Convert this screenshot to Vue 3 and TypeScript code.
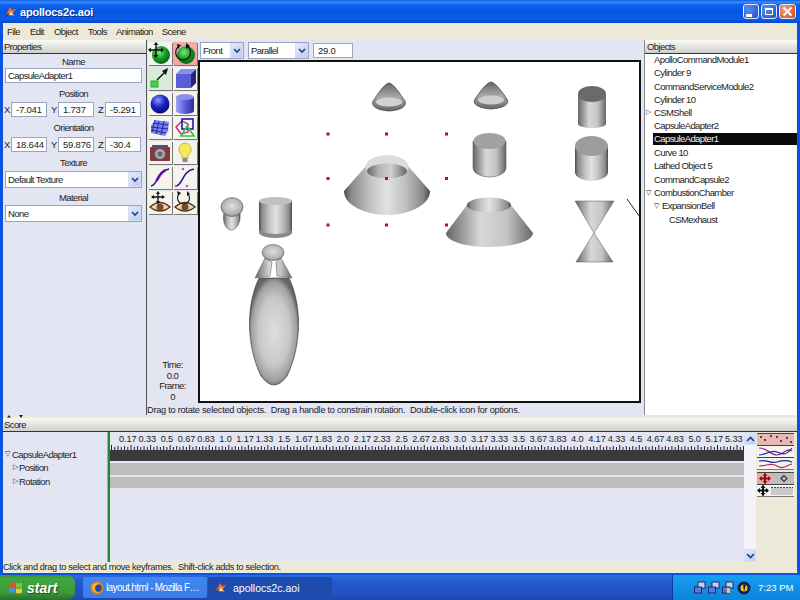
<script setup lang="ts">
const objects = [
  { name: 'ApolloCommandModule1', cls: '' },
  { name: 'Cylinder 9', cls: '' },
  { name: 'CommandServiceModule2', cls: '' },
  { name: 'Cylinder 10', cls: '' },
  { name: 'CSMShell', cls: 'closed' },
  { name: 'CapsuleAdapter2', cls: '' },
  { name: 'CapsuleAdapter1', cls: 'selected' },
  { name: 'Curve 10', cls: '' },
  { name: 'Lathed Object 5', cls: '' },
  { name: 'CommandCapsule2', cls: '' },
  { name: 'CombustionChamber', cls: 'open' },
  { name: 'ExpansionBell', cls: 'open deep' },
  { name: 'CSMexhaust', cls: 'deeper' },
]
const times = ['0.17','0.33','0.5','0.67','0.83','1.0','1.17','1.33','1.5','1.67','1.83','2.0','2.17','2.33','2.5','2.67','2.83','3.0','3.17','3.33','3.5','3.67','3.83','4.0','4.17','4.33','4.5','4.67','4.83','5.0','5.17','5.33']
const ticks = Array.from({ length: 195 }, (_, i) => ({
  x: 1 + i * 3.258,
  top: i % 6 === 0 ? 0 : i % 2 === 0 ? 1 : 2,
}))
const dotXs = [328, 386.5, 446.5]
const dotYs = [134, 178.5, 225]
</script>

<template>
  <div class="desktop">
    <div class="window">
      <div class="titlebar">
        <svg class="app-icon" width="12" height="11" viewBox="0 0 12 11">
          <path d="M1 9 L5 1 L7 4 L11 3 L8 7 L10 10 Z" fill="#e8702a" />
          <path d="M4 9 L6 5 L8 9 Z" fill="#f4e4c0" />
          <path d="M1 9 L4 7 L3 10 Z" fill="#20308a" />
        </svg>
        <span class="title">apollocs2c.aoi</span>
        <div class="caption">
          <span class="cap min"><i></i></span>
          <span class="cap max"><i></i></span>
          <span class="cap close">
            <svg width="11" height="11" viewBox="0 0 11 11"><path d="M1.5 1.5 L9.5 9.5 M9.5 1.5 L1.5 9.5" stroke="#fff" stroke-width="2" /></svg>
          </span>
        </div>
      </div>
      <div class="menubar">
        <span>File</span><span>Edit</span><span>Object</span><span>Tools</span><span>Animation</span><span>Scene</span>
      </div>

      <div class="main">
        <section class="props">
          <header class="head">Properties</header>
          <div class="prop-grid">
            <label>Name</label>
            <div class="input wide">CapsuleAdapter1</div>
            <label>Position</label>
            <div class="coords">
              <div class="coord"><b>X</b><div class="input">-7.041</div></div>
              <div class="coord"><b>Y</b><div class="input">1.737</div></div>
              <div class="coord"><b>Z</b><div class="input">-5.291</div></div>
            </div>
            <label>Orientation</label>
            <div class="coords">
              <div class="coord"><b>X</b><div class="input">18.644</div></div>
              <div class="coord"><b>Y</b><div class="input">59.876</div></div>
              <div class="coord"><b>Z</b><div class="input">-30.4</div></div>
            </div>
            <label>Texture</label>
            <div class="select wide"><span>Default Texture</span><em><svg width="8" height="6" viewBox="0 0 8 6"><path d="M1 1 L4 4 L7 1" fill="none" stroke="#27408b" stroke-width="1.7" /></svg></em></div>
            <label>Material</label>
            <div class="select wide"><span>None</span><em><svg width="8" height="6" viewBox="0 0 8 6"><path d="M1 1 L4 4 L7 1" fill="none" stroke="#27408b" stroke-width="1.7" /></svg></em></div>
          </div>
        </section>

        <aside class="tools">
          <div class="tool-grid">
            <div class="tool">
              <svg width="24" height="23" viewBox="0 0 24 23">
                <defs>
                  <radialGradient id="green" cx="0.4" cy="0.35" r="0.7"><stop offset="0" stop-color="#7ce87c" /><stop offset="0.5" stop-color="#1aa02a" /><stop offset="1" stop-color="#0a5a14" /></radialGradient>
                  <radialGradient id="blue" cx="0.4" cy="0.3" r="0.75"><stop offset="0" stop-color="#8c98ff" /><stop offset="0.5" stop-color="#1a22c4" /><stop offset="1" stop-color="#060a60" /></radialGradient>
                  <linearGradient id="bluecyl" x1="0" x2="1" y1="0" y2="0"><stop offset="0" stop-color="#a0a4f0" /><stop offset="0.5" stop-color="#5a60d8" /><stop offset="1" stop-color="#2a2e98" /></linearGradient>
                  <linearGradient id="metal" x1="0" x2="1" y1="0" y2="0"><stop offset="0" stop-color="#484848" /><stop offset="0.08" stop-color="#888" /><stop offset="0.3" stop-color="#c2c2c2" /><stop offset="0.5" stop-color="#e2e2e2" /><stop offset="0.7" stop-color="#c2c2c2" /><stop offset="0.92" stop-color="#888" /><stop offset="1" stop-color="#484848" /></linearGradient>
                  <linearGradient id="metal2" x1="0" x2="1" y1="0" y2="0"><stop offset="0" stop-color="#666" /><stop offset="0.4" stop-color="#d8d8d8" /><stop offset="0.7" stop-color="#c4c4c4" /><stop offset="1" stop-color="#666" /></linearGradient>
                  <linearGradient id="conegrad" x1="0" x2="0" y1="0" y2="1"><stop offset="0" stop-color="#666" /><stop offset="0.5" stop-color="#a8a8a8" /><stop offset="1" stop-color="#666" /></linearGradient>
                  <radialGradient id="ball" cx="0.5" cy="0.45" r="0.6"><stop offset="0" stop-color="#e0e0e0" /><stop offset="0.7" stop-color="#b4b4b4" /><stop offset="1" stop-color="#777" /></radialGradient>
                  <radialGradient id="body" cx="0.5" cy="0.5" r="0.52"><stop offset="0" stop-color="#dedede" /><stop offset="0.6" stop-color="#c8c8c8" /><stop offset="0.88" stop-color="#a0a0a0" /><stop offset="1" stop-color="#666" /></radialGradient>
                  <linearGradient id="hole" x1="0" x2="1" y1="0" y2="0"><stop offset="0" stop-color="#666" /><stop offset="0.3" stop-color="#b4b4b4" /><stop offset="0.6" stop-color="#d0d0d0" /><stop offset="1" stop-color="#666" /></linearGradient>
                </defs>
                <circle cx="13" cy="13" r="9" fill="url(#green)" />
                <path d="M8 2 V14 M2 8 H14" stroke="#111" stroke-width="1.4" />
                <path d="M8 0 L5.5 3 H10.500 Z M8 16 L5.5 13 H10.500 Z M0 8 L3 5.5 V10.500 Z M16 8 L13 5.500 V10.500 Z" fill="#111" />
              </svg>
            </div>
            <div class="tool on">
              <svg width="24" height="23" viewBox="0 0 24 23">
                <circle cx="13" cy="13" r="9" fill="url(#green)" />
                <path d="M5 5 A7.500 7.500 0 1 0 14 4" fill="none" stroke="#111" stroke-width="1.200" />
                <path d="M4 2 L8 3 L5 7 Z M13 1 L17 4 L13 7 Z" fill="#111" />
              </svg>
            </div>
            <div class="tool mint">
              <svg width="24" height="23" viewBox="0 0 24 23">
                <rect x="3" y="14" width="7" height="6" fill="#3ed24e" stroke="#2aa83a" />
                <path d="M9 13 L19 3" stroke="#111" stroke-width="1.500" />
                <path d="M20 1 L14 4 L18 8 Z" fill="#111" />
              </svg>
            </div>
            <div class="tool">
              <svg width="24" height="23" viewBox="0 0 24 23">
                <path d="M3 7 H18 V21 H3 Z" fill="#5a5cd8" />
                <path d="M3 7 L8 2 H23 L18 7 Z" fill="#8a8cf0" />
                <path d="M18 7 L23 2 V16 L18 21 Z" fill="#22247e" />
              </svg>
            </div>
            <div class="tool">
              <svg width="24" height="23" viewBox="0 0 24 23"><circle cx="12" cy="12" r="9.500" fill="url(#blue)" /></svg>
            </div>
            <div class="tool">
              <svg width="24" height="23" viewBox="0 0 24 23">
                <path d="M3 5 V19 A9 3 0 0 0 21 19 V5 Z" fill="url(#bluecyl)" />
                <ellipse cx="12" cy="5" rx="9" ry="3" fill="#8c90ec" />
              </svg>
            </div>
            <div class="tool">
              <svg width="24" height="23" viewBox="0 0 24 23">
                <path d="M7 4 L21 6 L20 15 L17 20 L3 17 L3 10 Z" fill="#7c82ea" />
                <path d="M5 7 L20 9 M3 11 L20 13 M3 14 L18 17 M11 5 L8 18 M16 5 L13 19 M7 4 L4 16" stroke="#1c2aa8" stroke-width="1" fill="none" />
              </svg>
            </div>
            <div class="tool">
              <svg width="24" height="23" viewBox="0 0 24 23">
                <path d="M3 11 L9 5 L15 8 L15 16 L8 18 Z" fill="none" stroke="#c41e78" stroke-width="1.300" />
                <rect x="9" y="3" width="11" height="10" fill="none" stroke="#141ea8" stroke-width="1.600" />
                <path d="M8 20 L14 10 L21 20 Z" fill="none" stroke="#2ccc44" stroke-width="1.700" />
              </svg>
            </div>
            <div class="tool">
              <svg width="24" height="23" viewBox="0 0 24 23">
                <rect x="2" y="6" width="20" height="14" rx="1" fill="#8a3440" />
                <rect x="4" y="4" width="16" height="3" fill="#5a4a78" />
                <circle cx="12" cy="13" r="5.500" fill="#a8a8a8" stroke="#555" />
                <circle cx="12" cy="13" r="2.500" fill="#666" />
              </svg>
            </div>
            <div class="tool">
              <svg width="24" height="23" viewBox="0 0 24 23">
                <path d="M12 2 A6.500 6.500 0 0 0 9 14 V17 H15 V14 A6.500 6.500 0 0 0 12 2 Z" fill="#f6e860" stroke="#c8b840" />
                <rect x="9.500" y="17" width="5" height="4" fill="#8a8a8a" />
              </svg>
            </div>
            <div class="tool">
              <svg width="24" height="23" viewBox="0 0 24 23">
                <path d="M3 20 C10 19 9 5 21 3" fill="none" stroke="#d83ae0" stroke-width="3" stroke-dasharray="14 20" stroke-dashoffset="-8" />
                <path d="M3 20 C10 19 9 5 21 3" fill="none" stroke="#10108c" stroke-width="1.400" />
              </svg>
            </div>
            <div class="tool">
              <svg width="24" height="23" viewBox="0 0 24 23">
                <path d="M3 20 C10 19 9 5 21 3" fill="none" stroke="#10108c" stroke-width="1.500" />
                <circle cx="10" cy="3" r="1.200" fill="#d83ae0" /><circle cx="14" cy="20" r="1.200" fill="#d83ae0" /><circle cx="3" cy="20" r="1.200" fill="#d83ae0" />
              </svg>
            </div>
            <div class="tool">
              <svg width="24" height="23" viewBox="0 0 24 23">
                <path d="M2 16 Q12 7 22 16 Q12 24 2 16 Z" fill="#e4d8c4" stroke="#5a3418" stroke-width="1.500" />
                <circle cx="12" cy="16" r="3.500" fill="#7a4a20" />
                <path d="M10 1 V12 M5 6 H15" stroke="#111" stroke-width="1.300" />
                <path d="M10 0 L8 3 H12 Z M10 13 L8 10 H12 Z M3 6 L6 4 V8 Z M17 6 L14 4 V8 Z" fill="#111" />
              </svg>
            </div>
            <div class="tool">
              <svg width="24" height="23" viewBox="0 0 24 23">
                <path d="M2 16 Q12 7 22 16 Q12 24 2 16 Z" fill="#e4d8c4" stroke="#5a3418" stroke-width="1.500" />
                <circle cx="12" cy="16" r="3.500" fill="#7a4a20" />
                <path d="M6 3 A6 6 0 1 0 15 3" fill="none" stroke="#111" stroke-width="1.100" />
                <path d="M4 0 L8 2 L5 5 Z M14 0 L17 3 L14 5 Z" fill="#111" />
              </svg>
            </div>
          </div>
          <div class="clock">
            <span>Time:</span><span>0.0</span><span>Frame:</span><span>0</span>
          </div>
        </aside>

        <section class="view">
          <div class="viewbar">
            <div class="select front"><span>Front</span><em><svg width="8" height="6" viewBox="0 0 8 6"><path d="M1 1 L4 4 L7 1" fill="none" stroke="#27408b" stroke-width="1.700" /></svg></em></div>
            <div class="select parallel"><span>Parallel</span><em><svg width="8" height="6" viewBox="0 0 8 6"><path d="M1 1 L4 4 L7 1" fill="none" stroke="#27408b" stroke-width="1.700" /></svg></em></div>
            <div class="input zoom">29.0</div>
          </div>
          <div class="canvas">
            <svg width="439" height="339" viewBox="200 62 439 339">
              <!-- top cones -->
              <path d="M389 83 C384 84 378 94 373 101 C371 106 376 110 389 111 C402 110 407 106 405 101 C400 94 394 84 389 83 Z" fill="url(#conegrad)" stroke="#333" stroke-width="0.700" />
              <ellipse cx="389" cy="102" rx="13" ry="4.500" fill="#d2d2d2" />
              <path d="M491 82 C486 83 480 92 475 99 C472 104 478 108 491 109 C504 108 510 104 507 99 C502 92 496 83 491 82 Z" fill="url(#conegrad)" stroke="#333" stroke-width="0.700" />
              <ellipse cx="491" cy="100" rx="13" ry="4.500" fill="#cecece" />

              <!-- right cylinders -->
              <path d="M578 94 V124 A14 4 0 0 0 606 124 V94 Z" fill="url(#metal2)" />
              <ellipse cx="592" cy="94" rx="14" ry="8" fill="#6a6a6a" />
              <path d="M575 146 V172 A16.500 9 0 0 0 608 172 V146 Z" fill="url(#metal)" />
              <ellipse cx="591.500" cy="146" rx="16.500" ry="10" fill="#9c9c9c" />
              <path d="M473 141 V168 A16.500 9 0 0 0 506 168 V141 Z" fill="url(#metal2)" stroke="#444" stroke-width="0.500" />
              <ellipse cx="489.500" cy="141" rx="16" ry="8" fill="#a2a2a2" />

              <!-- selected truncated cone -->
              <path d="M366 166 L344 191 C344 205 365 215 387 215 C409 215 430 205 430 191 L408 166 Z" fill="url(#metal)" />
              <ellipse cx="387" cy="167" rx="21.500" ry="12" fill="#dcdcdc" />
              <ellipse cx="387" cy="171" rx="20" ry="7.500" fill="url(#hole)" />

              <!-- lower truncated cone -->
              <path d="M467 205 L446 233 C446 241 465 247 489 247 C513 247 533 241 533 233 L511 205 Z" fill="url(#metal2)" />
              <ellipse cx="489" cy="205" rx="22" ry="7.500" fill="url(#metal)" />

              <!-- hourglass -->
              <path d="M575 201 H614 L594 233 Z" fill="url(#metal2)" stroke="#555" stroke-width="0.500" />
              <path d="M594 233 L613 262 H576 Z" fill="url(#metal2)" stroke="#555" stroke-width="0.500" />
              <path d="M627 199 L640 217" stroke="#222" stroke-width="1" />

              <!-- small capsule -->
              <path d="M224 213 C222 222 226 230 231 230 C237 230 241 222 240 213 Z" fill="url(#metal)" stroke="#444" stroke-width="0.500" />
              <ellipse cx="232" cy="207" rx="11" ry="9.500" fill="url(#ball)" stroke="#444" stroke-width="0.500" />

              <!-- left cylinder -->
              <path d="M259 201 V232 A16.500 6 0 0 0 292 232 V201 Z" fill="url(#metal)" />
              <ellipse cx="275.500" cy="201" rx="16.500" ry="4" fill="#c0c0c0" />
              <path d="M259 232 A16.500 6 0 0 0 292 232 L292 229 A16.500 5 0 0 1 259 229 Z" fill="#8a8a8a" />

              <!-- rocket -->
              <path d="M259 278 C246 305 246 345 261 376 Q 274 394 287 376 C 302 345 302 305 289 278 Z" fill="url(#body)" stroke="#333" stroke-width="0.600" />
              <path d="M265 258 L255 278 L270 276 L272 262 Z M281 258 L292 278 L277 276 L276 262 Z" fill="url(#metal2)" stroke="#555" stroke-width="0.500" />
              <ellipse cx="273" cy="252.500" rx="11" ry="8" fill="url(#ball)" stroke="#444" stroke-width="0.500" />

              <!-- handles -->
              <template v-for="y in dotYs" :key="y">
                <rect v-for="x in dotXs" :key="x" :x="x - 1.500" :y="y - 1.500" width="3" height="3" fill="#b2102c" />
              </template>
            </svg>
          </div>
          <div class="hint">Drag to rotate selected objects.&nbsp; Drag a handle to constrain rotation.&nbsp; Double-click icon for options.</div>
        </section>

        <section class="objects">
          <header class="head">Objects</header>
          <ul class="tree">
            <li v-for="o in objects" :key="o.name" :class="o.cls"><span>{{ o.name }}</span></li>
          </ul>
        </section>
      </div>

      <div class="split">
        <svg width="24" height="3" viewBox="0 0 24 3"><path d="M6 0 L8 2.500 H4 Z M18 3 L20 0 H16 Z" fill="#222" /></svg>
      </div>

      <div class="score">
        <header class="head score-head">Score</header>
        <div class="score-body">
          <div class="tracks">
            <div class="track-names">
              <div class="tn open">CapsuleAdapter1</div>
              <div class="tn closed deep">Position</div>
              <div class="tn closed deep">Rotation</div>
            </div>
            <div class="timeline">
              <div class="labels"><span v-for="t in times" :key="t">{{ t }}</span></div>
              <svg class="ticks" width="634" height="5" viewBox="0 0 634 5">
                <rect v-for="(t, i) in ticks" :key="i" :x="t.x" :y="t.top" width="1" :height="5 - t.top" fill="#222" />
              </svg>
              <div class="bar dark"></div>
              <div class="bar grey"></div>
              <div class="bar grey last"></div>
            </div>
            <div class="scroll">
              <div class="sb"><svg width="9" height="6" viewBox="0 0 9 6"><path d="M1 5 L4.500 1.500 L8 5" fill="none" stroke="#27408b" stroke-width="1.700" /></svg></div>
              <div class="sb"><svg width="9" height="6" viewBox="0 0 9 6"><path d="M1 1 L4.500 4.500 L8 1" fill="none" stroke="#27408b" stroke-width="1.700" /></svg></div>
            </div>
            <div class="palette">
              <div class="pal on">
                <svg width="37" height="11" viewBox="0 0 37 11"><g fill="#222"><circle cx="4" cy="3" r="1" /><circle cx="8" cy="6" r="1" /><circle cx="14" cy="2" r="1" /><circle cx="20" cy="3" r="1" /><circle cx="24" cy="7" r="1" /><circle cx="30" cy="4" r="1" /><circle cx="34" cy="8" r="1" /></g></svg>
              </div>
              <div class="pal">
                <svg width="37" height="11" viewBox="0 0 37 11"><path d="M2 2 C10 2 14 9 20 9 S30 1 35 5" fill="none" stroke="#a02a8c" stroke-width="1.200" /><path d="M2 9 C10 9 14 3 20 6 S30 9 35 2" fill="none" stroke="#1c2aa8" stroke-width="1.200" /></svg>
              </div>
              <div class="pal">
                <svg width="37" height="11" viewBox="0 0 37 11"><path d="M2 3 C10 1 14 6 20 4 S30 2 35 4" fill="none" stroke="#1c2aa8" stroke-width="1.200" /><path d="M2 8 C10 8 14 4 20 8 S30 7 35 6" fill="none" stroke="#b02a60" stroke-width="1.200" /></svg>
              </div>
              <div class="pal-gap"></div>
              <div class="pal on grey-pal">
                <svg width="37" height="11" viewBox="0 0 37 11"><path d="M8 0.500 V10.500 M3 5.500 H13" stroke="#8a1010" stroke-width="2" /><path d="M8 0 L5.500 3 H10.500 Z M8 11 L5.500 8 H10.500 Z M2 5.500 L5 3 V8 Z M14 5.500 L11 3 V8 Z" fill="#8a1010" /><path d="M24 5.500 L27 2.500 L30 5.500 L27 8.500 Z" fill="none" stroke="#333" stroke-width="1.200" /></svg>
              </div>
              <div class="pal">
                <svg width="37" height="11" viewBox="0 0 37 11"><rect x="14" y="3" width="22" height="7" fill="#c8c8c8" /><path d="M14 2.500 H36" stroke="#444" stroke-dasharray="2 1" /><path d="M6 0.500 V10.500 M1 5.500 H11" stroke="#111" stroke-width="2" /><path d="M6 0 L3.500 3 H8.500 Z M6 11 L3.500 8 H8.500 Z M0 5.500 L3 3 V8 Z M12 5.500 L9 3 V8 Z" fill="#111" /></svg>
              </div>
            </div>
          </div>
          <div class="score-status">Click and drag to select and move keyframes.&nbsp; Shift-click adds to selection.</div>
        </div>
      </div>
    </div>

    <footer class="taskbar">
      <div class="start">
        <svg width="15" height="14" viewBox="0 0 15 14">
          <path d="M1 2 Q4 0.500 7 2 V6.500 Q4 5 1 6.500 Z" fill="#e8502a" />
          <path d="M8 2 Q11 3 14 1.500 V6 Q11 7.500 8 6.500 Z" fill="#7ac83a" />
          <path d="M1 7.500 Q4 6 7 7.500 V12 Q4 10.500 1 12 Z" fill="#4a90e8" />
          <path d="M8 7.500 Q11 8.500 14 7 V11.500 Q11 13 8 12 Z" fill="#f4c830" />
        </svg>
        <span>start</span>
      </div>
      <div class="task first">
        <svg width="14" height="14" viewBox="0 0 14 14">
          <circle cx="7" cy="7" r="6.500" fill="#e8801e" />
          <circle cx="8" cy="7" r="3.800" fill="#2a4a98" />
          <path d="M3 3 Q7 1 10 3 Q6 3 5 7 Q5 11 9 12 Q3 12 2 7 Q2 5 3 3 Z" fill="#f6b030" />
        </svg>
        <span>layout.html - Mozilla F…</span>
      </div>
      <div class="task pressed">
        <svg width="12" height="11" viewBox="0 0 12 11">
          <path d="M1 9 L5 1 L7 4 L11 3 L8 7 L10 10 Z" fill="#e8702a" />
          <path d="M4 9 L6 5 L8 9 Z" fill="#f4e4c0" />
          <path d="M1 9 L4 7 L3 10 Z" fill="#20308a" />
        </svg>
        <span>apollocs2c.aoi</span>
      </div>
      <div class="tray">
        <svg width="40" height="14" viewBox="0 0 40 14">
          <g v-for="x in [0, 14, 28]" :key="x" :transform="`translate(${x} 0)`">
            <rect x="4" y="1" width="7" height="6" fill="#c4d4f0" stroke="#1c2a6c" />
            <rect x="0.500" y="6" width="7" height="6" fill="#5a7ad8" stroke="#1c2a6c" />
          </g>
          <rect x="33" y="7" width="3" height="5" fill="#f0d040" />
        </svg>
        <svg class="tray-b" width="14" height="14" viewBox="0 0 14 14">
          <circle cx="7" cy="7" r="6.500" fill="#141e50" />
          <circle cx="7" cy="7" r="3.500" fill="#f0c820" />
          <path d="M6 3.500 L9 3.500 L7 11 Z" fill="#141e50" />
        </svg>
        <span>7:23 PM</span>
      </div>
    </footer>
  </div>
</template>

<style>
html, body { margin: 0; padding: 0; }
</style>

<style scoped>
.desktop {
  width: 800px;
  height: 600px;
  display: flex;
  flex-direction: column;
  overflow: hidden;
  font-family: "Liberation Sans", Arial, sans-serif;
  font-size: 9.500px;
  letter-spacing: -0.600px;
  color: #1c1c1c;
}
.window {
  height: 575px;
  box-sizing: border-box;
  display: flex;
  flex-direction: column;
  background: #0a52e0;
  padding: 0 3px 2px;
}
.titlebar {
  height: 23px;
  margin: 0 -3px;
  padding: 0 4px 0 5px;
  display: flex;
  align-items: center;
  flex: none;
  background: linear-gradient(#0a5ae0 0, #3a8cf8 2px, #0a62ee 5px, #0455e4 12px, #0a5cec 19px, #0648d0 23px);
}
.app-icon { margin-right: 3px; }
.title {
  color: #fff;
  font-size: 11px;
  letter-spacing: -0.200px;
  font-weight: 700;
  text-shadow: 1px 1px 0 #0a2a88;
  padding-top: 1px;
}
.caption { margin-left: auto; display: flex; gap: 2px; }
.cap {
  width: 16px;
  height: 15px;
  border: 1px solid #e4ecfc;
  border-radius: 3px;
  box-sizing: border-box;
  background: radial-gradient(circle at 30% 30%, #5a8cf0, #2450c8);
  display: flex;
  align-items: center;
  justify-content: center;
}
.min i { width: 6px; height: 3px; background: #fff; margin: 7px 5px 0 0; }
.max i { width: 8px; height: 7px; border: 1px solid #fff; border-top-width: 2px; box-sizing: border-box; }
.close { background: radial-gradient(circle at 30% 30%, #f0a080, #d04818); width: 17px; }
.menubar {
  height: 17px;
  flex: none;
  background: #ece9d8;
  display: flex;
  align-items: center;
  padding-bottom: 1px;
  box-sizing: border-box;
  color: #222;
}
.menubar span:nth-child(1) { margin-left: 4px; }
.menubar span:nth-child(2) { margin-left: 10px; }
.menubar span:nth-child(3) { margin-left: 10px; }
.menubar span:nth-child(4) { margin-left: 10px; }
.menubar span:nth-child(5) { margin-left: 9px; }
.menubar span:nth-child(6) { margin-left: 9px; }

.main {
  height: 375px;
  flex: none;
  display: flex;
  background: #e4e5f3;
}
.head {
  height: 14px;
  box-sizing: border-box;
  padding: 1px 0 0 1px;
  background: linear-gradient(#fbfbf8, #cfcfcc);
  border-bottom: 1px solid #333;
  line-height: 12px;
  color: #222;
}
.props { width: 143px; flex: none; }
.prop-grid {
  display: grid;
  grid-template-rows: 14px 15px 19px 15px 20px 15px 19px 17px 17px 17px;
}
.prop-grid label {
  text-align: center;
  align-self: center;
  padding: 1px 2px 0 0;
}
.input {
  background: #fff;
  border: 1px solid #9aa4c0;
  box-sizing: border-box;
  padding: 0 0 0 2px;
  line-height: 13px;
  white-space: nowrap;
  overflow: hidden;
}
.wide { margin: 0 4px 0 2px; }
.coords {
  display: grid;
  grid-template-columns: 43px 43px 43px;
  column-gap: 4px;
  padding-left: 1px;
}
.coord { display: flex; align-items: center; }
.coord b { width: 7px; flex: none; font-weight: 400; }
.coord .input { flex: 1; height: 15px; min-width: 0; padding-left: 4px; letter-spacing: -0.200px; }
.select {
  display: flex;
  align-items: center;
  background: #fff;
  border: 1px solid #9aa4c0;
  box-sizing: border-box;
  padding-left: 2px;
}
.select span { flex: 1; }
.select em {
  width: 13px;
  height: 100%;
  display: flex;
  align-items: center;
  justify-content: center;
  background: linear-gradient(135deg, #e4ecfc, #bccdf0);
  border: 1px solid #d4def4;
  box-sizing: border-box;
}

.tools {
  width: 52px;
  flex: none;
  box-sizing: border-box;
  border-left: 1px solid #555;
  display: flex;
  flex-direction: column;
}
.tool-grid {
  display: grid;
  grid-template-columns: 24px 24px;
  grid-auto-rows: 23px;
  column-gap: 1px;
  row-gap: 1.800px;
  padding: 2px 0 0 1px;
}
.tool {
  background: #f4f4ec;
  box-shadow: 1px 1px 0 #777;
  overflow: hidden;
}
.tool svg { display: block; }
.tool.on { background: #f0aca4; }
.tool.mint { background: #d8ecd8; }
.clock {
  margin-top: auto;
  display: flex;
  flex-direction: column;
  align-items: center;
  padding: 0 0 12px;
  line-height: 10.800px;
}

.view {
  flex: 1;
  min-width: 0;
  display: flex;
  flex-direction: column;
}
.viewbar {
  height: 20px;
  flex: none;
  box-sizing: border-box;
  padding: 2px 0 1px 2px;
  display: flex;
  align-items: flex-start;
  gap: 4px;
}
.front { width: 44px; height: 17px; }
.parallel { width: 61px; height: 17px; }
.zoom { width: 40px; height: 15px; margin-top: 1px; padding-left: 4px; letter-spacing: -0.200px; }
.canvas {
  width: 443px;
  height: 343px;
  box-sizing: border-box;
  border: 2px solid #111;
  background: #fff;
  flex: none;
}
.canvas svg { display: block; }
.hint {
  white-space: nowrap;
  margin-left: -51px;
  line-height: 12px;
  padding-top: 1px;
  letter-spacing: -0.250px;
  font-size: 9.200px;
}
.objects {
  width: 155px;
  flex: none;
  box-sizing: border-box;
  margin-left: 1px;
  padding-left: 3px;
  background: linear-gradient(90deg, #e4e5f3 2px, #8a8a8a 2px, #8a8a8a 3px, transparent 3px);
  display: flex;
  flex-direction: column;
}
.objects .head { padding-left: 2px; }
.tree {
  flex: 1;
  list-style: none;
  margin: 0;
  padding: 0 0 0 8px;
  background: #fff;
  display: grid;
  grid-auto-rows: 13.300px;
  align-content: start;
}
.tree li { position: relative; line-height: 11.500px; }
.tree li span { display: block; padding-left: 1px; }
.tree li.selected span { background: #0a0a0a; color: #f0f0f0; height: 12px; line-height: 12px; margin-top: -0.800px; }
.tree li.closed::before, .tn.closed::before {
  content: "▷";
  font: 700 7px/11px "DejaVu Sans", sans-serif;
  position: absolute;
  left: -7px;
  top: 0;
  color: #222;
}
.tree li.open::before, .tn.open::before {
  content: "▽";
  font: 700 7px/11px "DejaVu Sans", sans-serif;
  position: absolute;
  left: -7px;
  top: 1px;
  color: #222;
}
.tree li.deep { padding-left: 8px; }
.tree li.deep::before { left: 1px; }
.tree li.deeper { padding-left: 15px; }

.split {
  height: 3px;
  flex: none;
  background: #ece9d8;
  line-height: 0;
}
.score {
  flex: 1;
  display: flex;
  flex-direction: column;
  min-height: 0;
  background: #ece9d8;
}
.score-head { background: linear-gradient(#f8f8f4, #d0d0cc); }
.score-body { flex: 1; display: flex; flex-direction: column; min-height: 0; }
.tracks { flex: 1; display: flex; min-height: 0; }
.track-names {
  width: 104px;
  flex: none;
  background: #e4e5f3;
  padding-top: 16px;
  border-right: 1px solid #a8a8a8;
}
.tn { height: 13.300px; line-height: 13.300px; padding-left: 9px; position: relative; }
.tn.open::before { left: 2px; }
.tn.deep { padding-left: 16px; }
.tn.closed::before { left: 10px; top: 1px; }
.timeline {
  width: 636px;
  flex: none;
  border-left: 2px solid #1e8c2a;
  background: #e4e5f3;
  box-sizing: border-box;
}
.labels {
  display: flex;
  margin-left: 8px;
  height: 13px;
  align-items: center;
  font-size: 9.200px;
  letter-spacing: -0.100px;
}
.labels span {
  width: 19.550px;
  flex: none;
  text-align: center;
  white-space: nowrap;
}
.ticks { display: block; height: 5px; }
.bar { margin-bottom: 2px; }
.bar.dark { background: #3a3a3a; height: 11px; }
.bar.grey { background: #bebebe; height: 12px; }
.bar.grey.last { height: 11px; }
.scroll {
  width: 12px;
  flex: none;
  background: #f4f4f8;
  display: flex;
  flex-direction: column;
  justify-content: space-between;
}
.sb {
  height: 13px;
  background: linear-gradient(135deg, #e4ecfc, #bccdf0);
  border: 1px solid #d4def4;
  box-sizing: border-box;
  display: flex;
  align-items: center;
  justify-content: center;
}
.palette {
  flex: 1;
  min-width: 0;
  padding: 1px 0 0 1px;
  display: flex;
  flex-direction: column;
  align-items: flex-start;
}
.pal {
  width: 37px;
  height: 11px;
  background: #f4f4f0;
  border-top: 1px solid #444;
  border-bottom: 1px solid #777;
  margin-bottom: -1px;
  line-height: 0;
}
.pal.on { background: #e8b8b8; }
.pal.grey-pal { background: linear-gradient(90deg, #e8a8a8 14px, #bebebe 14px); }
.pal-gap { height: 3px; }
.score-status {
  height: 11px;
  line-height: 11px;
  flex: none;
  white-space: nowrap;
  font-size: 9.200px;
  letter-spacing: -0.350px;
}

.taskbar {
  height: 25px;
  flex: none;
  display: flex;
  align-items: center;
  background: linear-gradient(#2a6cdc 0, #2a66d8 2px, #2458c8 8px, #1f52c0 20px, #1c48ac 25px);
  color: #fff;
  letter-spacing: 0;
}
.start {
  width: 75px;
  height: 25px;
  box-sizing: border-box;
  display: flex;
  align-items: center;
  padding-left: 8px;
  gap: 4px;
  border-radius: 0 8px 8px 0;
  background: linear-gradient(#3c8c3c, #3fa83f 15%, #3a9a3a 70%, #2a702a);
}
.start span {
  font-size: 14px;
  font-weight: 700;
  font-style: italic;
  text-shadow: 1px 1px 1px #1c4c1c;
}
.task {
  width: 124px;
  height: 21px;
  margin-left: 8px;
  box-sizing: border-box;
  border-radius: 2px;
  display: flex;
  align-items: center;
  gap: 2px;
  padding-left: 7px;
  background: linear-gradient(#4088f0, #3a7ce8);
  font-size: 10px;
  white-space: nowrap;
}
.task.first span { letter-spacing: -0.600px; }
.task.pressed {
  margin-left: 1px;
  background: #1e4cac;
  gap: 6px;
  font-size: 10.500px;
}
.tray {
  margin-left: auto;
  width: 128px;
  height: 25px;
  box-sizing: border-box;
  display: flex;
  align-items: center;
  padding-left: 21px;
  gap: 3px;
  background: linear-gradient(#18a0f0, #1290e8 50%, #0c84dc);
  border-left: 1px solid #0a3ca0;
  font-size: 9.500px;
  white-space: nowrap;
}
.tray span { margin-left: 4px; }
</style>
